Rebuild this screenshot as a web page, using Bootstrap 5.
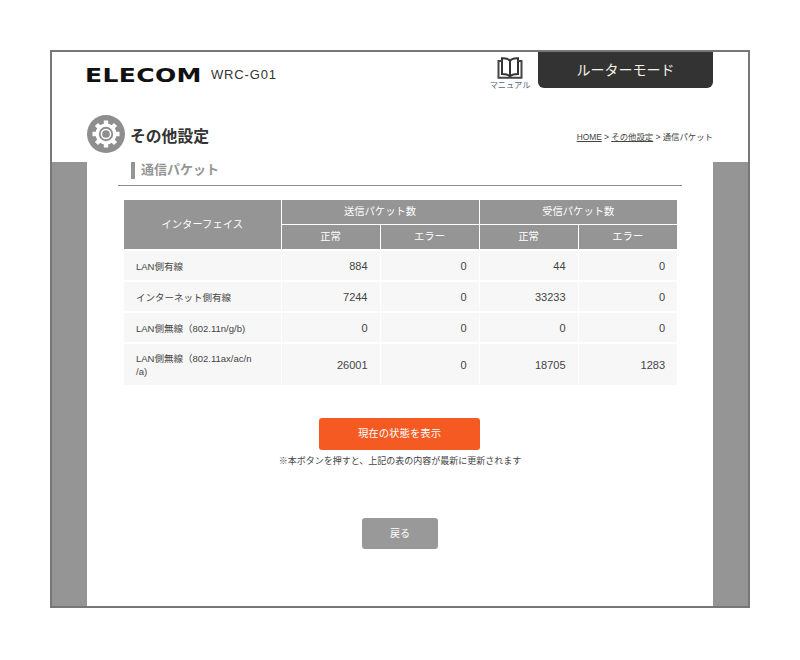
<!DOCTYPE html>
<html lang="ja">
<head>
<meta charset="utf-8">
<title>通信パケット</title>
<link href="https://cdn.jsdelivr.net/npm/bootstrap@5.3.0/dist/css/bootstrap.min.css" rel="stylesheet">
<style>
body{background:#fff;font-family:"Liberation Sans","Noto Sans CJK JP",sans-serif;color:#333;}
.frame{width:700px;height:558px;margin:50px auto 0;border:2px solid #777;background:#959595;}
.top-area{background:#fff;height:110px;padding:0 35px;}
.brand-row{height:58px;}
.brand-box{margin-top:13px;}
.logo-text{font-family:"DejaVu Sans",sans-serif;font-weight:700;font-size:20px;line-height:20px;letter-spacing:.3px;color:#111;display:inline-block;width:115px;margin-left:-2px;white-space:nowrap;transform:scaleX(1.25);transform-origin:left center;}
.model{font-family:"Liberation Sans",sans-serif;font-size:13px;letter-spacing:.85px;color:#333;margin-left:11px;}
.manual-link{width:56px;font-size:8.2px;line-height:10px;color:#4d6a85;margin-top:5px;}
.manual-label{margin-top:2px;}
.mode-tab{width:175px;height:36px;background:#333;color:#f4f1e6;border-radius:0 0 6px 6px;font-size:14px;line-height:36px;}
.page-head{height:47px;}
.gear-wrap{width:38px;height:38px;}
.head-title{font-size:15.8px;font-weight:700;color:#333;margin-left:5px;margin-top:7px;}
.crumbs{font-size:8.4px;color:#444;margin-top:8px;}
.crumbs a{color:#444;}
.side-col{width:35px;}
.main-col{width:626px;background:#fff;height:444px;padding:0 31px;}
.sec-title{height:23px;padding-left:13px;}
.sec-title span{display:block;border-left:4px solid #959595;height:17px;padding-left:6px;font-size:13px;font-weight:700;color:#959595;line-height:16px;}
.sec-rule{border-top:1px solid #8c8c8c;margin:0 0 14px;opacity:1;}
.pkt-table{width:553px;margin:0 0 0 6px;table-layout:fixed;border-collapse:collapse;}
.pkt-table th{background:#959595;color:#fff;font-weight:400;font-size:10.3px;text-align:center;vertical-align:middle;border:1px solid #fff;padding:0;height:26px;}
.pkt-table tr:first-child th{border-top:0;height:24px;}
.pkt-table td{background:#f7f7f7;color:#444;border:1px solid #fff;border-width:2px 1px 0;padding:1px 12px 0;height:31px;text-align:right;vertical-align:middle;font-size:11px;}
.pkt-table td.if-name{text-align:left;font-size:9.5px;line-height:13px;}
.pkt-table tr.tall td{height:42px;}
.pkt-table th:first-child,.pkt-table td:first-child{border-left:0;}
.pkt-table th:last-child,.pkt-table td:last-child{border-right:0;}
.btn-refresh{width:161px;height:32px;background:#f55a22;border:0;border-radius:3px;color:#fff;font-size:10.4px;padding:0;margin:33px 1px 0 0;}
.btn-refresh:hover{background:#f55a22;color:#fff;}
.note{font-size:9px;color:#444;margin-top:5px;line-height:13px;}
.btn-back{width:76px;height:31px;background:#999;border:0;border-radius:3px;color:#fff;font-size:10px;padding:0;margin-top:50px;}
.btn-back:hover{background:#999;color:#fff;}
</style>
</head>
<body>
<div class="frame">
  <div class="top-area">
    <div class="brand-row d-flex align-items-start">
      <div class="brand-box d-flex align-items-center flex-grow-1">
        <span class="logo-text">ELECOM</span>
        <span class="model">WRC-G01</span>
      </div>
      <div class="manual-link text-center">
        <svg class="d-block mx-auto" width="26" height="22" viewBox="0 0 26 22" fill="none" stroke="#333" stroke-width="2">
          <path d="M13 4C11.5 1.8 9 1 5 1.2V17C9 17 11.5 17.6 13 19.5C14.5 17.6 17 17 21 17V1.2C17 1 14.5 1.8 13 4Z"/>
          <path d="M13 4V19.5"/>
          <path d="M5 4H1.5V20.7H24.5V4H21" stroke="#444"/>
        </svg>
        <div class="manual-label">マニュアル</div>
      </div>
      <div class="mode-tab text-center">ルーターモード</div>
    </div>
    <div class="page-head d-flex justify-content-between align-items-center">
      <div class="d-flex align-items-center">
        <svg class="gear-wrap" viewBox="0 0 38 38">
          <circle cx="19" cy="19" r="19" fill="#8e8e8e"/>
          <circle cx="19" cy="19" r="10.5" fill="#fff"/>
          <path d="M19 5.5V32.5M5.5 19H32.5M9.45 9.45L28.55 28.55M9.45 28.55L28.55 9.45" stroke="#fff" stroke-width="4.4" fill="none"/>
          <circle cx="19" cy="19" r="7.2" fill="#8e8e8e"/>
          <circle cx="19" cy="19" r="4.6" fill="none" stroke="#fff" stroke-width="1.5"/>
        </svg>
        <div class="head-title">その他設定</div>
      </div>
      <div class="crumbs"><a href="#">HOME</a> &gt; <a href="#">その他設定</a> &gt; 通信パケット</div>
    </div>
  </div>
  <div class="d-flex">
    <div class="side-col"></div>
    <div class="main-col">
      <div class="sec-title"><span>通信パケット</span></div>
      <hr class="sec-rule">
      <table class="pkt-table">
        <colgroup><col style="width:157px"><col style="width:99px"><col style="width:99px"><col style="width:99px"><col style="width:99px"></colgroup>
        <thead>
          <tr><th rowspan="2">インターフェイス</th><th colspan="2">送信パケット数</th><th colspan="2">受信パケット数</th></tr>
          <tr><th>正常</th><th>エラー</th><th>正常</th><th>エラー</th></tr>
        </thead>
        <tbody>
          <tr><td class="if-name">LAN側有線</td><td>884</td><td>0</td><td>44</td><td>0</td></tr>
          <tr><td class="if-name">インターネット側有線</td><td>7244</td><td>0</td><td>33233</td><td>0</td></tr>
          <tr><td class="if-name">LAN側無線（802.11n/g/b)</td><td>0</td><td>0</td><td>0</td><td>0</td></tr>
          <tr class="tall"><td class="if-name">LAN側無線（802.11ax/ac/n<br>/a)</td><td>26001</td><td>0</td><td>18705</td><td>1283</td></tr>
        </tbody>
      </table>
      <div class="text-center">
        <button class="btn btn-refresh" type="button">現在の状態を表示</button>
        <div class="note">※本ボタンを押すと、上記の表の内容が最新に更新されます</div>
        <button class="btn btn-back" type="button">戻る</button>
      </div>
    </div>
    <div class="side-col"></div>
  </div>
</div>
</body>
</html>
